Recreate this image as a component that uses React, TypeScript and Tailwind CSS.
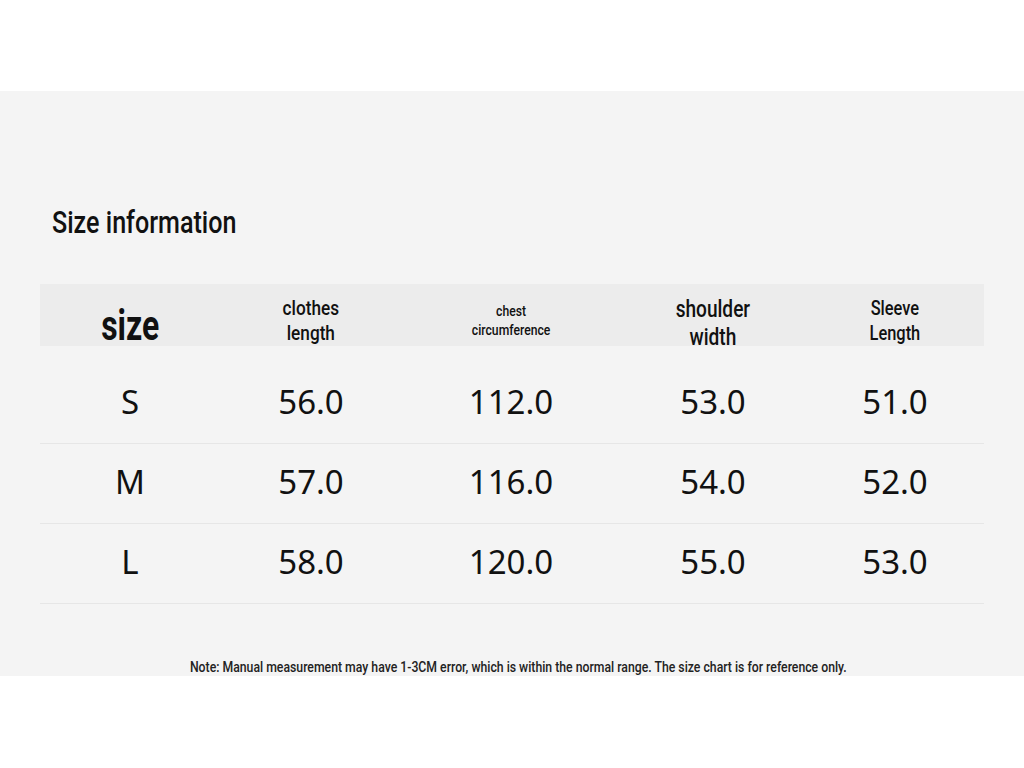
import type { ReactNode } from 'react';

// no condensed family is installed, so Roboto is narrowed with scale-x
const roboto = { fontFamily: 'Roboto, "Liberation Sans", sans-serif' };

const rows = [
  { size: 'S', values: ['56.0', '112.0', '53.0', '51.0'] },
  { size: 'M', values: ['57.0', '116.0', '54.0', '52.0'] },
  { size: 'L', values: ['58.0', '120.0', '55.0', '53.0'] },
];

const cols = 'grid grid-cols-[180px_182px_218px_186px_178px]';

function Narrow({ children, className = '' }: { children: ReactNode; className?: string }) {
  return (
    <span className={`inline-block ${className}`} style={roboto}>
      {children}
    </span>
  );
}

export default function App() {
  return (
    <div className="h-[768px] w-[1024px] bg-white">
      <div className="h-[91px]" />

      <section className="h-[585px] bg-[#f4f4f4] px-[40px] text-[#111]">
        {/* Title */}
        <h1 className="pt-[112px] pl-[12px] text-[31px] leading-[36px] font-medium">
          <Narrow className="origin-left scale-x-[0.81]">Size information</Narrow>
        </h1>

        {/* Header band */}
        <div className={`${cols} mt-[43px] h-[62px] items-center bg-[#ececec] pt-[6px] text-center`}>
          <div className="pt-[8px] text-[42px] leading-none font-bold">
            <Narrow className="scale-x-[0.76]">size</Narrow>
          </div>
          <div className="text-[20px] leading-[25px] font-medium">
            <Narrow className="scale-x-[0.86]">
              clothes
              <br />
              length
            </Narrow>
          </div>
          <div className="text-[14px] leading-[19px] font-medium">
            <Narrow className="scale-x-[0.87]">
              chest
              <br />
              circumference
            </Narrow>
          </div>
          <div className="pt-[6px] text-[23px] leading-[28px] font-medium">
            <Narrow className="scale-x-[0.83]">
              shoulder
              <br />
              width
            </Narrow>
          </div>
          <div className="text-[20px] leading-[25px] font-medium">
            <Narrow className="scale-x-[0.82]">
              Sleeve
              <br />
              Length
            </Narrow>
          </div>
        </div>

        {/* Rows */}
        <div className="mt-[18px]" style={{ fontFamily: '"Noto Sans", "Open Sans", sans-serif' }}>
          {rows.map((row) => (
            <div
              key={row.size}
              className={`${cols} h-[80px] items-center border-b border-[#e6e6e6] pb-[3px] text-center text-[33px]`}
            >
              <div>{row.size}</div>
              {row.values.map((v, i) => (
                <div key={i}>{v}</div>
              ))}
            </div>
          ))}
        </div>

        {/* Note */}
        <p className="mt-[54px] pl-[13px] text-center text-[14px] leading-[18px] font-medium text-[#222]">
          <Narrow className="scale-x-[0.875]">
            Note: Manual measurement may have 1-3CM error, which is within the normal range. The size chart is for reference only.
          </Narrow>
        </p>
      </section>
    </div>
  );
}
